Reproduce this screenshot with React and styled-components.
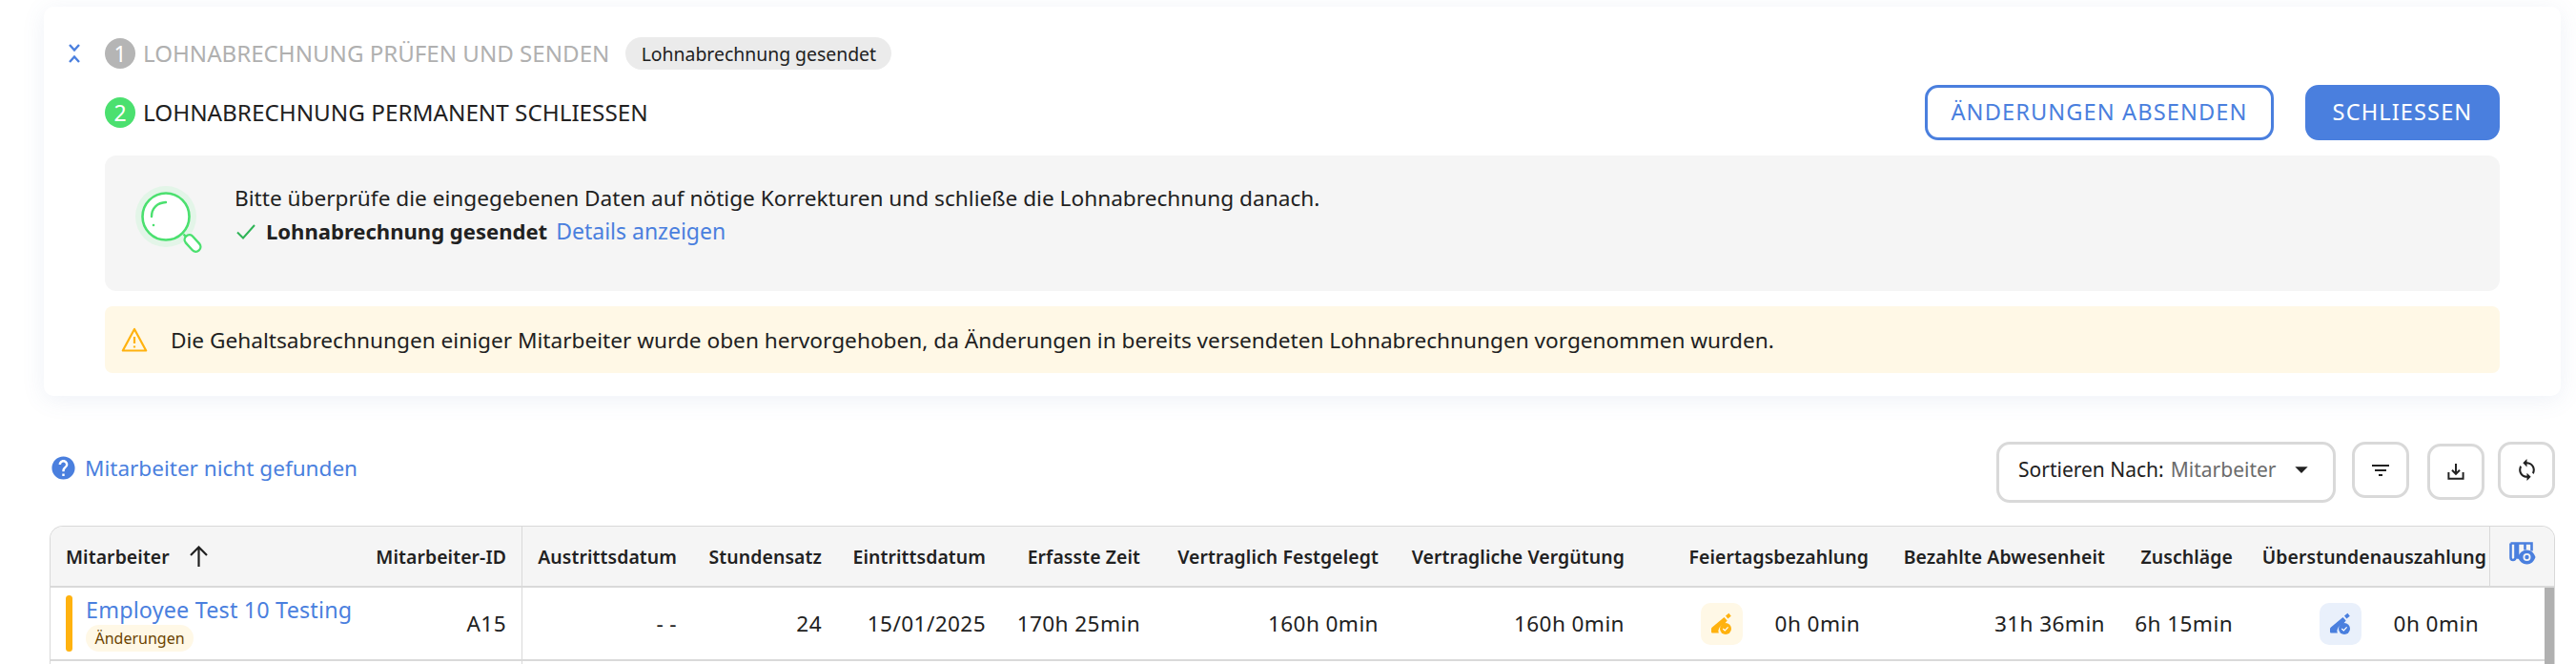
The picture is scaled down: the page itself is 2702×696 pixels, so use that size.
import React from 'react';
import styled, { createGlobalStyle } from 'styled-components';
import { MdFilterList, MdHelp, MdSync, MdArrowDropDown } from 'react-icons/md';

const BLUE = '#4a7fde';
const GREEN = '#4be06f';
const AMBER = '#ffb20f';
const LINE = '#d9d9d9';
const INK = '#212121';

const GlobalStyle = createGlobalStyle`
  html, body {
    margin: 0;
    background: #fff;
    font-family: "Noto Sans", "Open Sans", sans-serif;
    color: ${INK};
  }
  #root {
    height: 696px;
    overflow: hidden;
  }
`;

const Page = styled.div`
  box-sizing: border-box;
  width: 2702px;
  padding: 7px 16px 0 46px;
`;

const Card = styled.section`
  display: flex;
  background: #fff;
  border-radius: 10px;
  padding: 32px 64px 24px 26px;
  box-shadow: 0 4px 24px rgba(90, 120, 180, 0.1);
`;

const ChevronColumn = styled.div`
  flex: 0 0 38px;
  padding-top: 7px;
`;

const CardBody = styled.div`
  flex: 1;
  min-width: 0;
  display: flex;
  flex-direction: column;
  gap: 16px;
`;

const StepRow = styled.div`
  display: flex;
  align-items: center;
  height: ${(p) => p.$height}px;
`;

const StepBadge = styled.span`
  flex: 0 0 32px;
  height: 32px;
  border-radius: 50%;
  display: flex;
  align-items: center;
  justify-content: center;
  background: ${(p) => (p.$active ? GREEN : '#b5b5b5')};
  color: #fff;
  font-size: 23px;
`;

const StepTitle = styled.span`
  margin-left: 8px;
  padding-bottom: 2px;
  font-size: ${(p) => (p.$active ? 24.25 : 24.1)}px;
  color: ${(p) => (p.$active ? INK : '#b0b0b0')};
`;

const Chip = styled.span`
  margin-left: 17px;
  height: 34px;
  width: 279px;
  box-sizing: border-box;
  display: flex;
  align-items: center;
  justify-content: center;
  border-radius: 17px;
  background: #ebebeb;
  font-size: 19.4px;
`;

const Actions = styled.div`
  margin-left: auto;
  display: flex;
  gap: 33px;
`;

const Button = styled.button`
  box-sizing: border-box;
  height: 58px;
  width: ${(p) => p.$width}px;
  padding: 0 0 2px;
  border-radius: 14px;
  border: 3px solid ${BLUE};
  background: ${(p) => (p.$filled ? BLUE : '#fff')};
  color: ${(p) => (p.$filled ? '#fff' : BLUE)};
  font-family: inherit;
  font-size: 23.6px;
  letter-spacing: 1.1px;
`;

const InfoPanel = styled.div`
  display: flex;
  height: 142px;
  box-sizing: border-box;
  padding: 32px 0 0 32px;
  border-radius: 12px;
  background: #f5f5f5;
`;

const InfoText = styled.div`
  margin: -5px 0 0 32px;
  font-size: 22.65px;
  line-height: 35px;
`;

const StatusLine = styled.div`
  display: flex;
  align-items: center;
  padding-left: 2px;
`;

const Strong = styled.strong`
  margin-left: 11px;
  font-size: 22.05px;
  font-weight: 700;
`;

const TextLink = styled.a`
  margin-left: 9px;
  color: ${BLUE};
  font-size: 23px;
`;

const Notice = styled.div`
  display: flex;
  align-items: center;
  height: 70px;
  padding-left: 17px;
  gap: 24px;
  border-radius: 8px;
  background: #fff8e6;
  font-size: 22.65px;
`;

const Toolbar = styled.div`
  display: flex;
  align-items: flex-start;
  margin: 48px 6px 24px;
  height: 64px;
`;

const HelpLink = styled.a`
  display: flex;
  align-items: center;
  gap: 8px;
  margin-top: 12px;
  color: ${BLUE};
  font-size: 22.55px;
`;

const ToolGroup = styled.div`
  margin-left: auto;
  display: flex;
  align-items: flex-start;
`;

const SortSelect = styled.div`
  box-sizing: border-box;
  width: 356px;
  height: 64px;
  display: flex;
  align-items: center;
  padding: 0 17px 6px 20px;
  border: 3px solid ${LINE};
  border-radius: 14px;
  font-size: 21px;
`;

const SortValue = styled.span`
  margin-left: 7px;
  color: #6b6b6b;
`;

const CaretSlot = styled.span`
  margin-left: auto;
  display: flex;
`;

const IconButton = styled.button`
  box-sizing: border-box;
  width: 60px;
  height: 59px;
  margin: ${(p) => p.$top || 0}px 0 0 ${(p) => p.$left}px;
  padding: 0;
  display: flex;
  align-items: center;
  justify-content: center;
  background: #fff;
  border: 3px solid ${LINE};
  border-radius: 14px;
  color: ${INK};
`;

const Table = styled.div`
  position: relative;
  margin: 0 6px;
  border: 1px solid ${LINE};
  border-bottom: 0;
  border-radius: 14px 14px 0 0;
  overflow: hidden;
`;

const Row = styled.div`
  display: grid;
  grid-template-columns: 495px 178px 152px 172px 162px 250px 258px 256px 248px 134px 254px 1fr;
  height: ${(p) => p.$height}px;
  box-sizing: border-box;
  border-bottom: 2px solid ${LINE};
  background: ${(p) => (p.$head ? '#f5f5f5' : '#fff')};
`;

const HeadCell = styled.div`
  display: flex;
  align-items: center;
  justify-content: flex-end;
  padding-right: ${(p) => p.$pad ?? 16}px;
  font-size: 19.4px;
  font-weight: 600;
  letter-spacing: 0.1px;
  white-space: nowrap;
`;

const Cell = styled.div`
  display: flex;
  align-items: center;
  justify-content: flex-end;
  padding-right: ${(p) => p.$pad ?? 16}px;
  gap: 34px;
  font-size: 22.6px;
  letter-spacing: 0.4px;
  white-space: nowrap;
`;

const FrozenHead = styled(HeadCell)`
  justify-content: space-between;
  padding: 0 16px;
  border-right: 1px solid ${LINE};
`;

const SortLabel = styled.span`
  display: flex;
  align-items: center;
  gap: 20px;
`;

const FrozenCell = styled(Cell)`
  justify-content: space-between;
  padding: 0 16px;
  border-right: 1px solid ${LINE};
`;

const ChangeMark = styled.div`
  display: flex;
  align-items: stretch;
  gap: 14px;
  height: 59px;
`;

const MarkBar = styled.span`
  width: 7px;
  border-radius: 4px;
  background: ${AMBER};
`;

const EmployeeInfo = styled.div`
  display: flex;
  flex-direction: column;
  justify-content: space-between;
  align-items: flex-start;
`;

const EmployeeName = styled.a`
  color: ${BLUE};
  font-size: 23.3px;
  line-height: 30px;
  letter-spacing: 0.2px;
`;

const ChangeTag = styled.span`
  height: 28px;
  width: 113px;
  display: flex;
  align-items: center;
  justify-content: center;
  border-radius: 14px;
  background: #fff8e6;
  color: #6b4300;
  font-size: 16px;
  letter-spacing: 0;
`;

const EditTile = styled.span`
  width: 44px;
  height: 44px;
  display: flex;
  align-items: center;
  justify-content: center;
  border-radius: 10px;
  background: ${(p) => (p.$blue ? '#e9f0fb' : '#fff8e6')};
  color: ${(p) => (p.$blue ? BLUE : AMBER)};
`;

const ColumnsCell = styled.div`
  display: flex;
  align-items: center;
  justify-content: center;
  border-left: 1px solid ${LINE};
  padding-bottom: 6px;
  margin-left: -1px;
`;

const Scrollbar = styled.div`
  position: absolute;
  top: 64px;
  right: 0;
  bottom: 0;
  width: 10px;
  background: #b0b0b0;
`;

function Chevrons() {
  return (
    <svg width="12" height="20" viewBox="0 0 12 20" fill="none" stroke={BLUE} strokeWidth="2.4">
      <path d="M1 1l5 5.5L11 1" />
      <path d="M1 19l5-5.5L11 19" />
    </svg>
  );
}

function Magnifier() {
  return (
    <svg width="72" height="72" viewBox="0 0 72 72" fill="none">
      <circle cx="32" cy="32" r="32" fill="#e3f5e8" />
      <circle cx="32" cy="32" r="24.5" fill="#fff" stroke={GREEN} strokeWidth="2.6" />
      <path d="M17 32c0-9 6-14.500 15-15" stroke={GREEN} strokeWidth="2.4" strokeLinecap="round" />
      <circle cx="19" cy="41" r="1.300" fill={GREEN} />
      <path d="M50.500 50.500l2.500 2.500" stroke={GREEN} strokeWidth="2.4" />
      <rect x="-5" y="-10" width="10" height="20" rx="5" transform="translate(60 60) rotate(-42)" stroke={GREEN} strokeWidth="2.4" fill="#fff" />
    </svg>
  );
}

function Warning() {
  return (
    <svg width="28" height="26" viewBox="0 0 28 26" fill="none" stroke={AMBER} strokeWidth="2.2">
      <path d="M14 2L1.800 24.500h24.400z" strokeLinejoin="round" />
      <path d="M14 10v7M14 19.500v2" />
    </svg>
  );
}

function CheckMark() {
  return (
    <svg width="20" height="16" viewBox="0 0 20 16" fill="none" stroke="#2fb457" strokeWidth="2">
      <path d="M1 8.500l6 6L19 1" />
    </svg>
  );
}

function SortArrow() {
  return (
    <svg width="21" height="22" viewBox="0 0 21 22" fill="none" stroke={INK} strokeWidth="2.2">
      <path d="M10.500 22V2M2 10l8.500-8.500L19 10" />
    </svg>
  );
}

function DownloadIcon() {
  return (
    <svg width="18" height="17" viewBox="0 0 20 19" fill="none" stroke={INK} strokeWidth="2.2">
      <path d="M1.500 10v7.500h17V10" />
      <path d="M10 0v11M5.500 7.500L10 12l4.500-4.500" />
    </svg>
  );
}

function PencilCheck() {
  return (
    <svg width="24" height="24" viewBox="0 0 24 24">
      <path fill="currentColor" d="M16 3.500l3.400-2.700 2.400 3-3.400 2.700zM14.500 5l3.200 3.500-3.300 4a7 7 0 0 0-5.600 9H2.500c-1 0-1.500-.6-1.500-1.600v-2.600c0-.6.2-1.100.6-1.500z" />
      <circle cx="16" cy="17" r="6" fill="currentColor" />
      <path d="M13.300 17l2 2 3.300-3.600" fill="none" stroke="#fff" strokeWidth="1.200" />
    </svg>
  );
}

function ColumnsEye() {
  return (
    <svg width="28" height="25" viewBox="0 0 28 25" fill="none">
      <path d="M1.500 1.500h22v8M1.500 1.500v15a2.500 2.500 0 0 0 5 0v-15M9 1.500v15h3M16.500 1.500v7" stroke={BLUE} strokeWidth="2.600" />
      <path fill={BLUE} d="M18.500 8.500c4.300 0 7.500 3 9 7.500-1.500 4.500-4.700 7.500-9 7.500s-8-3-9.500-7.500c1.500-4.500 5.200-7.500 9.500-7.500z" />
      <circle cx="18.500" cy="16" r="4" fill="#f5f5f5" />
      <circle cx="18.500" cy="16" r="2.200" fill={BLUE} />
    </svg>
  );
}

const headers = [
  ['Austrittsdatum'],
  ['Stundensatz'],
  ['Eintrittsdatum'],
  ['Erfasste Zeit'],
  ['Vertraglich Festgelegt'],
  ['Vertragliche Vergütung'],
  ['Feiertagsbezahlung'],
  ['Bezahlte Abwesenheit'],
  ['Zuschläge'],
  ['Überstundenauszahlung', 4],
];

export default function App() {
  return (
    <Page>
      <GlobalStyle />
      <Card>
        <ChevronColumn>
          <Chevrons />
        </ChevronColumn>
        <CardBody>
          <StepRow $height={34}>
            <StepBadge>1</StepBadge>
            <StepTitle>LOHNABRECHNUNG PRÜFEN UND SENDEN</StepTitle>
            <Chip>Lohnabrechnung gesendet</Chip>
          </StepRow>
          <StepRow $height={58}>
            <StepBadge $active>2</StepBadge>
            <StepTitle $active>LOHNABRECHNUNG PERMANENT SCHLIESSEN</StepTitle>
            <Actions>
              <Button $width={366}>ÄNDERUNGEN ABSENDEN</Button>
              <Button $width={204} $filled>SCHLIESSEN</Button>
            </Actions>
          </StepRow>
          <InfoPanel>
            <Magnifier />
            <InfoText>
              <div>Bitte überprüfe die eingegebenen Daten auf nötige Korrekturen und schließe die Lohnabrechnung danach.</div>
              <StatusLine>
                <CheckMark />
                <Strong>Lohnabrechnung gesendet</Strong>
                <TextLink>Details anzeigen</TextLink>
              </StatusLine>
            </InfoText>
          </InfoPanel>
          <Notice>
            <Warning />
            <span>Die Gehaltsabrechnungen einiger Mitarbeiter wurde oben hervorgehoben, da Änderungen in bereits versendeten Lohnabrechnungen vorgenommen wurden.</span>
          </Notice>
        </CardBody>
      </Card>

      <Toolbar>
        <HelpLink>
          <MdHelp size={29} />
          Mitarbeiter nicht gefunden
        </HelpLink>
        <ToolGroup>
          <SortSelect>
            Sortieren Nach:<SortValue>Mitarbeiter</SortValue>
            <CaretSlot><MdArrowDropDown size={32} /></CaretSlot>
          </SortSelect>
          <IconButton $left={17}><MdFilterList size={24} /></IconButton>
          <IconButton $left={19} $top={2}><DownloadIcon /></IconButton>
          <IconButton $left={14}><MdSync size={25} /></IconButton>
        </ToolGroup>
      </Toolbar>

      <Table>
        <Row $head $height={64}>
          <FrozenHead>
            <SortLabel>Mitarbeiter<SortArrow /></SortLabel>
            <span>Mitarbeiter-ID</span>
          </FrozenHead>
          {headers.map(([label, pad]) => (
            <HeadCell key={label} $pad={pad}>{label}</HeadCell>
          ))}
          <ColumnsCell><ColumnsEye /></ColumnsCell>
        </Row>
        <Row $height={77}>
          <FrozenCell>
            <ChangeMark>
              <MarkBar />
              <EmployeeInfo>
                <EmployeeName>Employee Test 10 Testing</EmployeeName>
                <ChangeTag>Änderungen</ChangeTag>
              </EmployeeInfo>
            </ChangeMark>
            <span>A15</span>
          </FrozenCell>
          <Cell>- -</Cell>
          <Cell>24</Cell>
          <Cell>15/01/2025</Cell>
          <Cell>170h 25min</Cell>
          <Cell>160h 0min</Cell>
          <Cell>160h 0min</Cell>
          <Cell $pad={25}>
            <EditTile><PencilCheck /></EditTile>
            0h 0min
          </Cell>
          <Cell>31h 36min</Cell>
          <Cell>6h 15min</Cell>
          <Cell $pad={12}>
            <EditTile $blue><PencilCheck /></EditTile>
            0h 0min
          </Cell>
          <div />
        </Row>
        <Row $height={77}>
          <FrozenCell />
        </Row>
        <Scrollbar />
      </Table>
    </Page>
  );
}
